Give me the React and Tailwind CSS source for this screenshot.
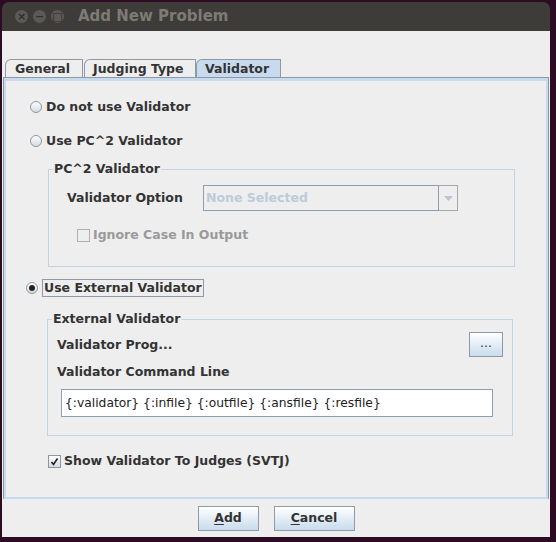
import React from "react";

const font = { fontFamily: '"DejaVu Sans", sans-serif' };

const Radio = ({ checked }) => (
  <span className="w-[12px] h-[12px] rounded-full border border-[#8f979e] bg-gradient-to-b from-white to-[#d4dbe2] flex items-center justify-center shrink-0">
    {checked && <span className="w-[6px] h-[6px] rounded-full bg-[#222]" />}
  </span>
);

const Check = ({ checked, disabled }) => (
  <span
    className={
      "w-[13px] h-[13px] border flex items-center justify-center shrink-0 " +
      (disabled ? "border-[#b0b0b0] bg-[#eeeeee]" : "border-[#8f979e] bg-gradient-to-b from-white to-[#d4dbe2]")
    }
  >
    {checked && (
      <svg width="9" height="9" viewBox="0 0 9 9">
        <path d="M1.5 5 L3.5 7.5 L7.5 1.5" stroke="#222" strokeWidth="1.6" fill="none" />
      </svg>
    )}
  </span>
);

const Group = ({ title, className, children }) => (
  <div className={"relative border border-[#c3d3e2] " + className}>
    <span className="absolute -top-[9px] left-[4px] bg-[#eeeeee] px-[1px] text-[12.5px] font-bold text-[#333] leading-[16px] whitespace-nowrap">
      {title}
    </span>
    {children}
  </div>
);

const Btn = ({ children, className }) => (
  <button
    className={
      "border border-[#8e9aa6] bg-gradient-to-b from-white to-[#c9dbec] text-[12.5px] font-bold text-[#333] " +
      className
    }
  >
    {children}
  </button>
);

export default function App() {
  return (
    <div className="w-[556px] h-[542px] bg-[#2d0b22] pt-[2px] pl-[2px] overflow-hidden" style={font}>
      <div className="w-[548px] h-[535px] rounded-t-[7px] overflow-hidden flex flex-col">
        <div className="h-[29px] bg-[#3e3c38] flex items-center pl-[13px] shrink-0">
          <div className="flex gap-[5px]">
            {["×", "−", "□"].map((g) => (
              <span
                key={g}
                className="w-[13px] h-[13px] rounded-full bg-[#5c5a55] text-[#2e2d2a] text-[11px] leading-[13px] text-center font-bold"
              >
                {g}
              </span>
            ))}
          </div>
          <span className="ml-[14px] text-[15px] font-bold text-[#7d7b75]">Add New Problem</span>
        </div>
        <div className="flex-1 bg-[#eeeeee] flex flex-col pt-[28px]">
          <div className="flex h-[18px] pl-[3px] text-[12.5px] font-bold text-[#333] leading-[17px] whitespace-nowrap">
            <div className="border border-b-0 border-[#8e99a5] rounded-tl-[6px] pl-[9px] w-[78px] mr-[1px]">General</div>
            <div className="border border-b-0 border-[#8e99a5] rounded-tl-[6px] pl-[8px] w-[112px]">Judging Type</div>
            <div className="border border-b-0 border-[#8e99a5] rounded-tl-[6px] pl-[8px] w-[85px] bg-[#c8daed]">Validator</div>
          </div>
          <div className="h-[422px] border-t border-l border-r border-[#8e99a5] mr-[1px] ml-[1px] bg-[#eeeeee] flex flex-col">
            <div className="h-[3px] bg-[#c8daed]" />
            <div className="flex-1 border-l-[2px] border-r-[2px] border-b-[2px] border-[#c8daed] text-[12.5px] font-bold text-[#333] leading-[16px] pl-[20px]">
              <div className="flex items-center gap-[4px] mt-[18px] pl-[4px]">
                <Radio />
                <span>Do not use Validator</span>
              </div>
              <div className="flex items-center gap-[4px] mt-[18px] pl-[4px]">
                <Radio />
                <span>Use PC^2 Validator</span>
              </div>
              <Group title="PC^2 Validator" className="mt-[20px] ml-[22px] w-[467px] h-[98px]">
                <div className="flex items-center mt-[15px] pl-[18px]">
                  <span className="w-[136px]">Validator Option</span>
                  <div className="flex h-[26px] w-[255px]">
                    <div className="flex-1 border border-[#8c9eb0] bg-[#eeeeee] pl-[2px] leading-[23px] text-[#bccbdb]">
                      None Selected
                    </div>
                    <div className="w-[19px] border border-l-0 border-[#a8a8a8] flex items-center justify-center">
                      <svg width="9" height="5" viewBox="0 0 9 5">
                        <path d="M0 0 H9 L4.5 5 Z" fill="#b4c6d8" />
                      </svg>
                    </div>
                  </div>
                </div>
                <div className="flex items-center gap-[3px] mt-[16px] pl-[28px] text-[#9a9a9a]">
                  <Check disabled />
                  <span>Ignore Case In Output</span>
                </div>
              </Group>
              <div className="flex items-center gap-[4px] mt-[12px]">
                <Radio checked />
                <span className="border border-[#8e99a5] px-[1px]">Use External Validator</span>
              </div>
              <Group title="External Validator" className="mt-[22px] ml-[21px] w-[466px] h-[117px]">
                <div className="flex items-center justify-between mt-[12px] pl-[9px] pr-[9px]">
                  <span>Validator Prog...</span>
                  <Btn className="w-[34px] h-[25px] font-normal leading-[10px] pb-[4px]">...</Btn>
                </div>
                <div className="pl-[9px] mt-[7px]">Validator Command Line</div>
                <div className="ml-[13px] w-[432px] mt-[9px] h-[28px] border border-[#8c9eb0] bg-white font-normal text-[12.3px] text-[#222] pl-[3px] leading-[26px] whitespace-nowrap">
                  {"{:validator} {:infile} {:outfile} {:ansfile} {:resfile}"}
                </div>
              </Group>
              <div className="flex items-center gap-[3px] mt-[17px] pl-[22px]">
                <Check checked />
                <span>Show Validator To Judges (SVTJ)</span>
              </div>
            </div>
          </div>
          <div className="flex justify-center gap-[15px] pt-[7px]">
            <Btn className="w-[61px] h-[25px]">
              <span className="underline underline-offset-2">A</span>dd
            </Btn>
            <Btn className="w-[81px] h-[25px]">
              <span className="underline underline-offset-2">C</span>ancel
            </Btn>
          </div>
        </div>
      </div>
    </div>
  );
}
